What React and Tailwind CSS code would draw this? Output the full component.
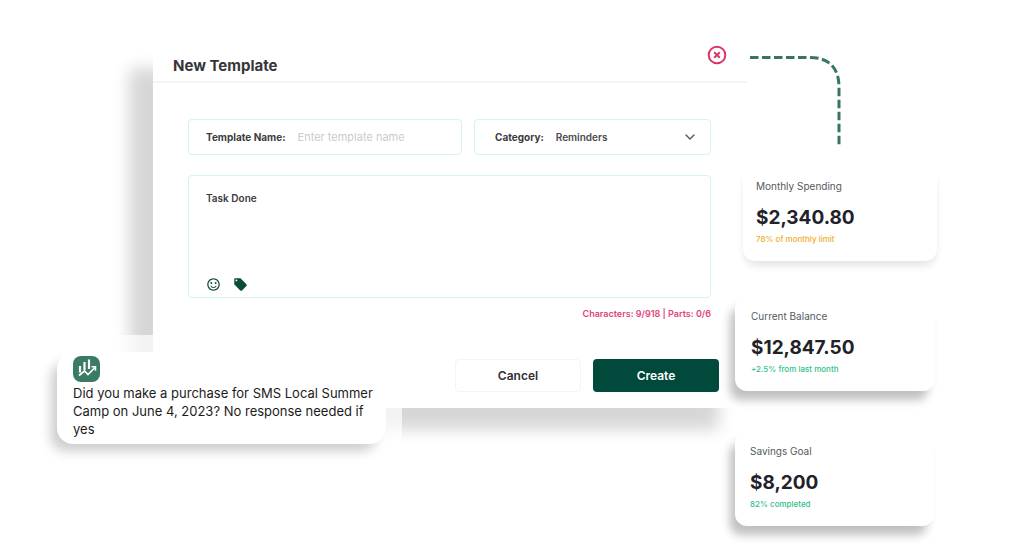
import { useState } from 'react'
import { MdLocalOffer, MdOutlineSentimentSatisfiedAlt } from 'react-icons/md'
import { FiChevronDown } from 'react-icons/fi'

const stats = [
  {
    label: 'Monthly Spending',
    value: '$2,340.80',
    note: '78% of monthly limit',
    noteColor: 'text-[#f0ad2b]',
    card: 'ml-2 pl-[13px] mt-5 shadow-[0_6px_8px_-2px_rgba(0,0,0,0.12)]',
  },
  {
    label: 'Current Balance',
    value: '$12,847.50',
    note: '+2.5% from last month',
    noteColor: 'text-[#2fc087]',
    card: 'pl-4 mr-0.5 mt-9 shadow-[-6px_10px_10px_-1px_rgba(0,0,0,0.25),0_0_4px_10px_rgba(255,255,255,0.7)]',
  },
  {
    label: 'Savings Goal',
    value: '$8,200',
    note: '82% completed',
    noteColor: 'text-[#2fc087]',
    card: 'pl-[15px] mr-[3px] mt-[41px] shadow-[-6px_10px_10px_-1px_rgba(0,0,0,0.25),0_0_4px_10px_rgba(255,255,255,0.7)]',
  },
]

function StatCard({ stat }) {
  return (
    <article className={`bg-white rounded-xl pt-[11px] pb-3.5 pr-4 ${stat.card}`}>
      <h3 className="text-[10px] leading-4 text-[#555a60]">{stat.label}</h3>
      <p className="mt-2.5 text-[19px] leading-7 font-bold text-[#1f2329]">{stat.value}</p>
      <p className={`-mt-px text-[8px] leading-4 font-medium ${stat.noteColor}`}>{stat.note}</p>
    </article>
  )
}

function Connector() {
  return (
    <svg className="ml-[15px] block" width="92" height="92" viewBox="0 0 92 92" fill="none" aria-hidden="true">
      <path d="M0 2.5H60C80 2.5 89 14 89 32V93" stroke="#37775f" strokeWidth="3" strokeDasharray="8.5 3.5" />
    </svg>
  )
}

function TemplateModal() {
  const [name, setName] = useState('')
  const [category, setCategory] = useState('Reminders')
  const [message, setMessage] = useState('Task Done')

  return (
    <section className="ml-[113px] rounded-lg bg-white shadow-[-26px_24px_16px_-2px_rgba(0,0,0,0.16)]">
      <header className="flex justify-between h-[41px] pl-5 pr-5 border-b-2 border-[#f5f5f5]">
        <h1 className="pt-3 text-[15px] leading-6 font-bold text-[#36363a]">New Template</h1>
        <button type="button" aria-label="Close" className="self-start mt-[3px]">
          <svg width="20" height="20" viewBox="0 0 20 20" fill="none" stroke="#dc3668" strokeWidth="2">
            <circle cx="10" cy="10" r="8.3" />
            <path d="M7.2 7.2l5.6 5.6M12.8 7.2l-5.6 5.6" />
          </svg>
        </button>
      </header>

      <form className="pl-[35px] pr-9 pt-9 pb-4" onSubmit={(e) => e.preventDefault()}>
        <div className="grid grid-cols-[274fr_237fr] gap-3">
          <div className="flex items-center h-9 px-[17px] border border-[#d3f5eb] rounded">
            <label htmlFor="name" className="text-[10px] font-bold text-[#3c3c40] whitespace-nowrap">Template Name:</label>
            <input
              id="name"
              type="text"
              placeholder="Enter template name"
              value={name}
              onChange={(e) => setName(e.target.value)}
              className="ml-3 w-full min-w-0 text-[11px] text-[#3c3c40] outline-none placeholder:text-[#cbcbcb]"
            />
          </div>
          <div className="flex items-center h-9 pl-5 pr-3 border border-[#d3f5eb] rounded">
            <label htmlFor="category" className="text-[10px] font-bold text-[#3c3c40]">Category:</label>
            <select
              id="category"
              value={category}
              onChange={(e) => setCategory(e.target.value)}
              className="ml-3 flex-1 min-w-0 appearance-none text-[10px] font-semibold text-[#4a4a4e] outline-none"
            >
              <option>Reminders</option>
              <option>Promotions</option>
            </select>
            <FiChevronDown className="pointer-events-none text-base text-[#55555a]" />
          </div>
        </div>

        <div className="mt-5 flex flex-col h-[123px] px-[17px] pt-3 pb-[5px] border border-[#d3f5eb] rounded">
          <textarea
            aria-label="Message"
            value={message}
            onChange={(e) => setMessage(e.target.value)}
            className="flex-1 w-full resize-none text-[10px] leading-5 font-semibold text-[#3c3c40] outline-none"
          />
          <div className="flex gap-3 text-[15px] text-[#0b4b3a]">
            <button type="button" aria-label="Insert emoji"><MdOutlineSentimentSatisfiedAlt /></button>
            <button type="button" aria-label="Insert tag"><MdLocalOffer /></button>
          </div>
        </div>

        <p className="mt-2 text-right text-[9px] leading-4 font-semibold text-[#e0447a]">
          Characters: 9/918 | Parts: 0/6
        </p>

        <div className="mt-[37px] -mr-2 flex justify-end gap-3 text-xs font-semibold">
          <button type="button" className="w-[126px] h-[33px] rounded border border-[#f1f6f5] text-[#303034]">Cancel</button>
          <button type="submit" className="w-[126px] h-[33px] rounded bg-[#00493b] text-white">Create</button>
        </div>
      </form>
    </section>
  )
}

function SmsBubble() {
  return (
    <div className="relative -mt-[73px] w-[362px] pt-[17px] pl-[17px] pr-4 pb-3.5 rounded-2xl bg-white/70">
      <div className="pt-1 pb-1.5 pl-4 pr-3 bg-white rounded-2xl shadow-[-8px_9px_12px_-2px_rgba(0,0,0,0.2)]">
        <svg width="27" height="27" viewBox="0 0 27 27" fill="none" aria-hidden="true">
          <rect width="27" height="26" rx="8" fill="#397b67" />
          <path d="M7 10v6.500M11.500 6v8M16 3.500v9.500" stroke="#fff" strokeWidth="2.200" />
          <path d="M6 19.500l5.500-4.500 3.500 3.500 7-7" stroke="#fff" strokeWidth="1.700" />
          <path d="M18.500 10.800h4v4" stroke="#fff" strokeWidth="1.500" />
        </svg>
        <p className="mt-px text-[13px] leading-[18px] text-[#1b1b1b]">
          Did you make a purchase for SMS Local Summer Camp on June 4, 2023? No response needed if yes
        </p>
      </div>
    </div>
  )
}

function App() {
  return (
    <main className="flex items-start min-h-screen bg-white pl-10 pr-[87px] font-['Inter',sans-serif]">
      <div className="flex-1 min-w-0 pt-[42px]">
        <TemplateModal />
        <SmsBubble />
      </div>
      <aside className="relative -ml-3 w-[202px] pt-[55px]">
        <Connector />
        {stats.map((stat) => (
          <StatCard key={stat.label} stat={stat} />
        ))}
      </aside>
    </main>
  )
}

export default App
